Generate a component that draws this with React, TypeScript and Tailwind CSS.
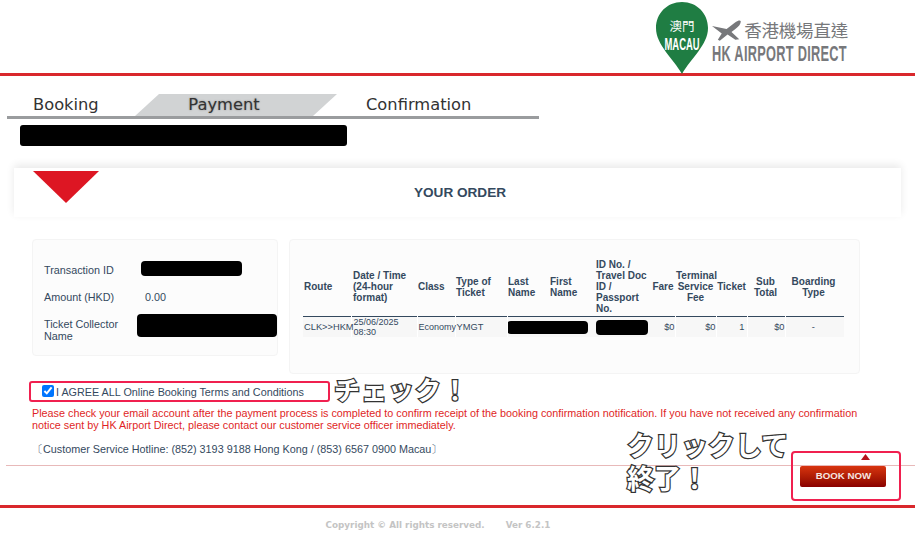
const outline = "font-['Noto_Sans_CJK_JP',sans-serif] text-white [-webkit-text-stroke:2.5px_#333] [paint-order:stroke_fill] font-bold";

const headers = [
    { label: "Route", align: "text-left" },
    { label: "Date / Time (24-hour format)", align: "text-left pl-[2px]" },
    { label: "Class", align: "text-left" },
    { label: "Type of Ticket", align: "text-left" },
    { label: "Last Name", align: "text-left" },
    { label: "First Name", align: "text-left" },
    { label: "ID No. / Travel Doc ID / Passport No.", align: "text-left" },
    { label: "Fare", align: "text-center" },
    { label: "Terminal Service Fee", align: "text-center" },
    { label: "Ticket", align: "text-center" },
    { label: "Sub Total", align: "text-center pr-[2px]" },
    { label: "Boarding Type", align: "text-center pr-[3px]" },
];

function Logo() {
    return (
        <div className="flex items-start pr-[67px]">
            <svg width="54" height="74" viewBox="0 0 54 74" className="mt-[1px]">
                <path d="M27 1C12 1 1 12.500 1 27c0 17 17 30 26 46 9-16 26-29 26-46C53 12.500 42 1 27 1z" fill="#1f7d43" />
                <text x="27" y="30" textAnchor="middle" fontSize="12.500" fill="#fff" fontFamily="'Noto Sans CJK TC', sans-serif">澳門</text>
                <text x="27" y="49" textAnchor="middle" fontSize="16" fontWeight="700" fill="#fff" fontFamily="'Liberation Sans', sans-serif" textLength="35" lengthAdjust="spacingAndGlyphs">MACAU</text>
            </svg>
            <div className="ml-[3px] pt-[16px] w-[136px]">
                <div className="flex items-center h-[28px]">
                    <svg width="31" height="21" viewBox="0 0 31 21">
                        <path d="M0 6l15 3 9-7c3-2 5-2.500 5.500-1 .3 2-1.500 5-5.500 8l-4 3 8 7.500-4 .5-8-5.500-8 6.500-2-1 4-6.500L0 6z" fill="#77787b" />
                    </svg>
                    <span className="ml-[2px] font-['Noto_Sans_CJK_TC',sans-serif] text-[17.500px] leading-none tracking-[-0.2px] text-[#77787b] whitespace-nowrap">香港機場直達</span>
                </div>
                <div className="origin-left scale-x-[0.58] -mt-[1px] font-['Liberation_Sans',sans-serif] text-[22px] leading-[22px] font-bold tracking-[0.5px] text-[#77787b] whitespace-nowrap">HK AIRPORT DIRECT</div>
            </div>
        </div>
    );
}

function Tabs() {
    return (
        <div className="ml-[7px] w-[532px] h-[25px] border-b-[3px] border-[#9a9c9e] flex items-end font-['DejaVu_Sans',sans-serif] text-[16.300px] leading-[22px] text-[#333]">
            <div className="w-[128px] pl-[26px] h-[22px]">Booking</div>
            <div className="w-[202px] h-[22px] [clip-path:polygon(24px_0,100%_0,178px_100%,0_100%)] bg-[#d1d3d4] text-center pr-[24px] [text-shadow:0_0_2px_#888]">Payment</div>
            <div className="pl-[29px] h-[22px]">Confirmation</div>
        </div>
    );
}

export default function App() {
    return (
        <div className="relative w-[915px] h-[540px] overflow-hidden bg-white font-['Liberation_Sans',sans-serif]">
            {/* Header */}
            <div className="h-[76px] border-b-[3px] border-[#d9282c] flex justify-end">
                <Logo />
            </div>

            <div className="pt-[18px]">
                <Tabs />
            </div>
            <div className="ml-[20px] mt-[6px] w-[327px] h-[21px] rounded-[3px] bg-black" />

            {/* Order card */}
            <div className="mt-[22px] mx-[14px] h-[49px] relative flex items-center justify-center bg-white shadow-[0_-3px_8px_rgba(0,0,0,0.09)]">
                <div className="absolute left-[19px] top-[3px] w-[66px] h-[32px] bg-[#dd1623] [clip-path:polygon(0_0,100%_0,50%_100%)]" />
                <h2 className="text-[13.600px] font-bold text-[#34495e] pt-[2px] pl-[5px]">YOUR ORDER</h2>
            </div>

            {/* Panels */}
            <div className="mt-[22px] ml-[32px] flex items-start gap-[11px]">
                <div className="w-[246px] h-[117px] rounded-[4px] border border-[#f4f4f4] bg-[#fcfcfc] pl-[11px] pt-[22px] text-[10.800px] leading-[12px] text-[#34495e]">
                    <div className="flex items-center h-[16px]">
                        <span className="w-[97px]">Transaction ID</span>
                        <span className="w-[101px] h-[15px] rounded-[4px] bg-black mb-[4px]" />
                    </div>
                    <div className="flex items-center h-[12px] mt-[13px]">
                        <span className="w-[101px]">Amount (HKD)</span>
                        <span>0.00</span>
                    </div>
                    <div className="flex items-start mt-[15px]">
                        <span className="w-[94px]">Ticket Collector Name</span>
                        <span className="w-[141px] h-[23px] rounded-[4px] bg-black -mt-[4px]" />
                    </div>
                </div>

                <div className="w-[571px] h-[135px] rounded-[4px] border border-[#f4f4f4] bg-[#fcfcfc] pl-[13px] pt-[19px]">
                    <table className="table-fixed border-collapse w-[541px] text-[10px] leading-[11px] text-[#34495e]">
                        <colgroup>
                            <col className="w-[48px]" />
                            <col className="w-[66px]" />
                            <col className="w-[38px]" />
                            <col className="w-[52px]" />
                            <col className="w-[42px]" />
                            <col className="w-[46px]" />
                            <col className="w-[56px]" />
                            <col className="w-[24px]" />
                            <col className="w-[41px]" />
                            <col className="w-[31px]" />
                            <col className="w-[38px]" />
                            <col className="w-[59px]" />
                        </colgroup>
                        <thead>
                            <tr className="border-b border-[#34495e] h-[55px]">
                                {headers.map((h) => (
                                    <th key={h.label} className={`font-bold align-middle px-[1px] pb-[2px] ${h.align}`}>{h.label}</th>
                                ))}
                            </tr>
                        </thead>
                        <tbody>
                            <tr className="h-[20px] bg-[#f7f7f7] align-middle text-[9.300px] leading-[10px]">
                                <td className="pl-[1px] whitespace-nowrap border-r border-white">CLK&gt;&gt;HKM</td>
                                <td className="pl-[2px] text-[9px] border-r border-white">25/06/2025 08:30</td>
                                <td className="pl-[1px] text-[9px] border-r border-white">Economy</td>
                                <td className="pl-[1px] border-r border-white">YMGT</td>
                                <td colSpan={2}>
                                    <div className="ml-[-1px] w-[81px] h-[13px] rounded-[4px] bg-black" />
                                </td>
                                <td>
                                    <div className="ml-[1px] w-[52px] h-[15px] rounded-[4px] bg-black" />
                                </td>
                                <td className="text-right border-r border-white">$0</td>
                                <td className="text-right border-r border-white">$0</td>
                                <td className="text-right pr-[2px] border-r border-white">1</td>
                                <td className="text-right border-r border-white">$0</td>
                                <td className="text-center pr-[3px]">-</td>
                            </tr>
                        </tbody>
                    </table>
                </div>
            </div>

            {/* Agreement */}
            <div className="ml-[32px] pt-[8px]">
                <label className="flex items-center h-[21px] pl-[10px] text-[10.800px] text-[#34495e]">
                    <input type="checkbox" defaultChecked readOnly className="w-[12px] h-[12px] mb-[3px] mr-[2px] accent-[#0075ff]" />
                    <span>I AGREE ALL Online Booking Terms and Conditions</span>
                </label>
                <p className="mt-[4px] w-[835px] text-[10.800px] leading-[12px] text-[#e01f26]">
                    Please check your email account after the payment process is completed to confirm receipt of the booking confirmation notification. If you have not received any confirmation notice sent by HK Airport Direct, please contact our customer service officer immediately.
                </p>
                <p className="mt-[12px] text-[10.800px] leading-[12px] text-[#34495e]">〔Customer Service Hotline: (852) 3193 9188 Hong Kong / (853) 6567 0900 Macau〕</p>
            </div>

            {/* Divider and action */}
            <div className="relative ml-[6px] mt-[10px] h-[40px] border-t border-[#e8b9b9]">
                <span className="absolute left-[855px] -top-[12px] w-[9px] h-[6px] bg-[#b5121b] [clip-path:polygon(50%_0,100%_100%,0_100%)]" />
                <button className="absolute left-[794px] top-0 w-[86px] h-[21px] pl-[1px] rounded-[2px] bg-gradient-to-b from-[#d8340f] to-[#8a0000] text-[9.700px] font-bold text-[#f6e6e0]">BOOK NOW</button>
            </div>

            {/* Footer */}
            <div className="border-t-[3px] border-[#d9282c] flex justify-center gap-[21px] pt-[11px] pr-[39px] font-['DejaVu_Sans',sans-serif] text-[8.800px] leading-[12px] font-bold text-[#c4c4c4]">
                <span>Copyright © All rights reserved.</span>
                <span>Ver 6.2.1</span>
            </div>

            {/* Hand-drawn annotations laid over the page */}
            <div className="absolute left-[29px] top-[381px] w-[301px] h-[21px] rounded-[3px] border-2 border-[#f0204f]" />
            <div className="absolute left-[791px] top-[451px] w-[110px] h-[50px] rounded-[4px] border-2 border-[#f0204f]" />
            <div className={`absolute left-[334px] top-[372px] text-[26px] leading-[34px] tracking-[1px] whitespace-nowrap ${outline}`}>チェック！</div>
            <div className={`absolute left-[627px] top-[428px] text-[27px] leading-[33px] whitespace-nowrap ${outline}`}>
                クリックして<br />終了！
            </div>
        </div>
    );
}
